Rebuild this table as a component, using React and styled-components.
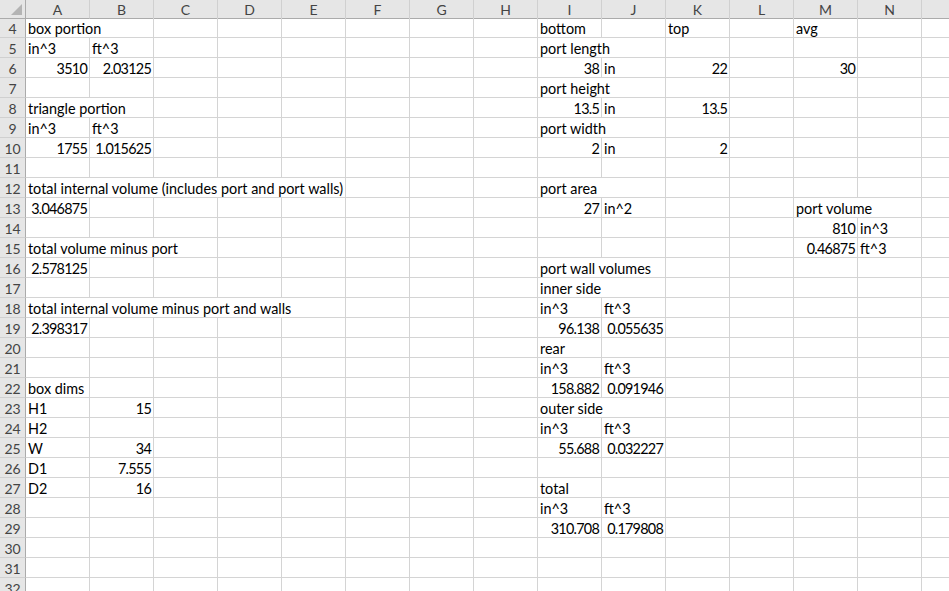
import React from "react";
import styled, { createGlobalStyle } from "styled-components";

const GlobalStyle = createGlobalStyle`
  html, body {
    margin: 0;
    padding: 0;
    background: #fff;
    overflow: hidden;
  }
  body {
    font-family: Lato, "Liberation Sans", sans-serif;
  }
`;

const COLS = ["A", "B", "C", "D", "E", "F", "G", "H", "I", "J", "K", "L", "M", "N", "O"];
const colIndex = (c) => COLS.indexOf(c) + 2;

// row -> list of [col, value, span, align]
const DATA = {
  4: [["A", "box portion", 2], ["I", "bottom"], ["K", "top"], ["M", "avg"]],
  5: [["A", "in^3"], ["B", "ft^3"], ["I", "port length", 2]],
  6: [["A", "3510", 1, "r"], ["B", "2.03125", 1, "r"], ["I", "38", 1, "r"], ["J", "in"], ["K", "22", 1, "r"], ["M", "30", 1, "r"]],
  7: [["I", "port height", 2]],
  8: [["A", "triangle portion", 2], ["I", "13.5", 1, "r"], ["J", "in"], ["K", "13.5", 1, "r"]],
  9: [["A", "in^3"], ["B", "ft^3"], ["I", "port width", 2]],
  10: [["A", "1755", 1, "r"], ["B", "1.015625", 1, "r"], ["I", "2", 1, "r"], ["J", "in"], ["K", "2", 1, "r"]],
  12: [["A", "total internal volume (includes port and port walls)", 5], ["I", "port area", 2]],
  13: [["A", "3.046875", 1, "r"], ["I", "27", 1, "r"], ["J", "in^2"], ["M", "port volume", 2]],
  14: [["M", "810", 1, "r"], ["N", "in^3"]],
  15: [["A", "total volume minus port", 3], ["M", "0.46875", 1, "r"], ["N", "ft^3"]],
  16: [["A", "2.578125", 1, "r"], ["I", "port wall volumes", 2]],
  17: [["I", "inner side", 2]],
  18: [["A", "total internal volume minus port and walls", 5], ["I", "in^3"], ["J", "ft^3"]],
  19: [["A", "2.398317", 1, "r"], ["I", "96.138", 1, "r"], ["J", "0.055635", 1, "r"]],
  20: [["I", "rear"]],
  21: [["I", "in^3"], ["J", "ft^3"]],
  22: [["A", "box dims"], ["I", "158.882", 1, "r"], ["J", "0.091946", 1, "r"]],
  23: [["A", "H1"], ["B", "15", 1, "r"], ["I", "outer side", 2]],
  24: [["A", "H2"], ["I", "in^3"], ["J", "ft^3"]],
  25: [["A", "W"], ["B", "34", 1, "r"], ["I", "55.688", 1, "r"], ["J", "0.032227", 1, "r"]],
  26: [["A", "D1"], ["B", "7.555", 1, "r"]],
  27: [["A", "D2"], ["B", "16", 1, "r"], ["I", "total"]],
  28: [["I", "in^3"], ["J", "ft^3"]],
  29: [["I", "310.708", 1, "r"], ["J", "0.179808", 1, "r"]],
};

const Sheet = styled.div`
  display: flex;
  flex-direction: column;
  width: 949px;
  height: 591px;
  overflow: hidden;
  color: #000;
  font-size: 14.4px;
`;

const Row = styled.div`
  display: grid;
  grid-template-columns: 26px repeat(15, 64px);
  height: ${(p) => p.$h}px;
  flex: none;
`;

const Corner = styled.div`
  background: #e6e6e6;
  border-right: 1px solid #ababab;
  border-bottom: 1px solid #ababab;
  position: relative;
  box-sizing: border-box;
  &::after {
    content: "";
    position: absolute;
    right: 3px;
    bottom: 3px;
    width: 0;
    height: 0;
    border-left: 11px solid transparent;
    border-bottom: 11px solid #b4b4b4;
  }
`;

const ColHead = styled.div`
  background: #e6e6e6;
  border-right: 1px solid #d0d0d0;
  border-bottom: 1px solid #ababab;
  box-sizing: border-box;
  display: flex;
  align-items: center;
  justify-content: center;
  color: #444;
  font-size: 14px;
  padding-top: 1px;
`;

const RowHead = styled.div`
  background: #e6e6e6;
  border-right: 1px solid #ababab;
  border-bottom: 1px solid #d0d0d0;
  box-sizing: border-box;
  display: flex;
  align-items: center;
  justify-content: center;
  color: #444;
  font-size: 14px;
  padding-top: 1px;
`;

const Cell = styled.div`
  grid-column: ${(p) => p.$col} / span ${(p) => p.$span};
  grid-row: 1;
  border-right: 1px solid #d4d4d4;
  border-bottom: 1px solid #d4d4d4;
  box-sizing: border-box;
  display: flex;
  align-items: center;
  justify-content: ${(p) => (p.$right ? "flex-end" : "flex-start")};
  padding: 2px ${(p) => (p.$right ? "2px" : "3px")} 0 2px;
  white-space: nowrap;
  letter-spacing: ${(p) => (p.$right ? "-0.75px" : "0")};
  min-width: 0;
`;

function SheetRow({ n }) {
  const items = DATA[n] || [];
  const taken = new Set();
  items.forEach(([c, , span = 1]) => {
    for (let i = 0; i < span; i++) taken.add(colIndex(c) + i);
  });
  const cells = [];
  for (let ci = 2; ci <= COLS.length + 1; ci++) {
    if (!taken.has(ci)) cells.push(<Cell key={ci} $col={ci} $span={1} />);
  }
  items.forEach(([c, v, span = 1, align]) => {
    cells.push(
      <Cell key={c + "v"} $col={colIndex(c)} $span={span} $right={align === "r"}>
        {v}
      </Cell>
    );
  });
  return (
    <Row $h={20}>
      <RowHead>{n}</RowHead>
      {cells}
    </Row>
  );
}

export default function App() {
  const rows = [];
  for (let n = 4; n <= 32; n++) rows.push(<SheetRow key={n} n={n} />);
  return (
    <>
      <GlobalStyle />
      <Sheet>
        <Row $h={18}>
          <Corner />
          {COLS.map((c) => (
            <ColHead key={c}>{c === "O" ? "" : c}</ColHead>
          ))}
        </Row>
        {rows}
      </Sheet>
    </>
  );
}
